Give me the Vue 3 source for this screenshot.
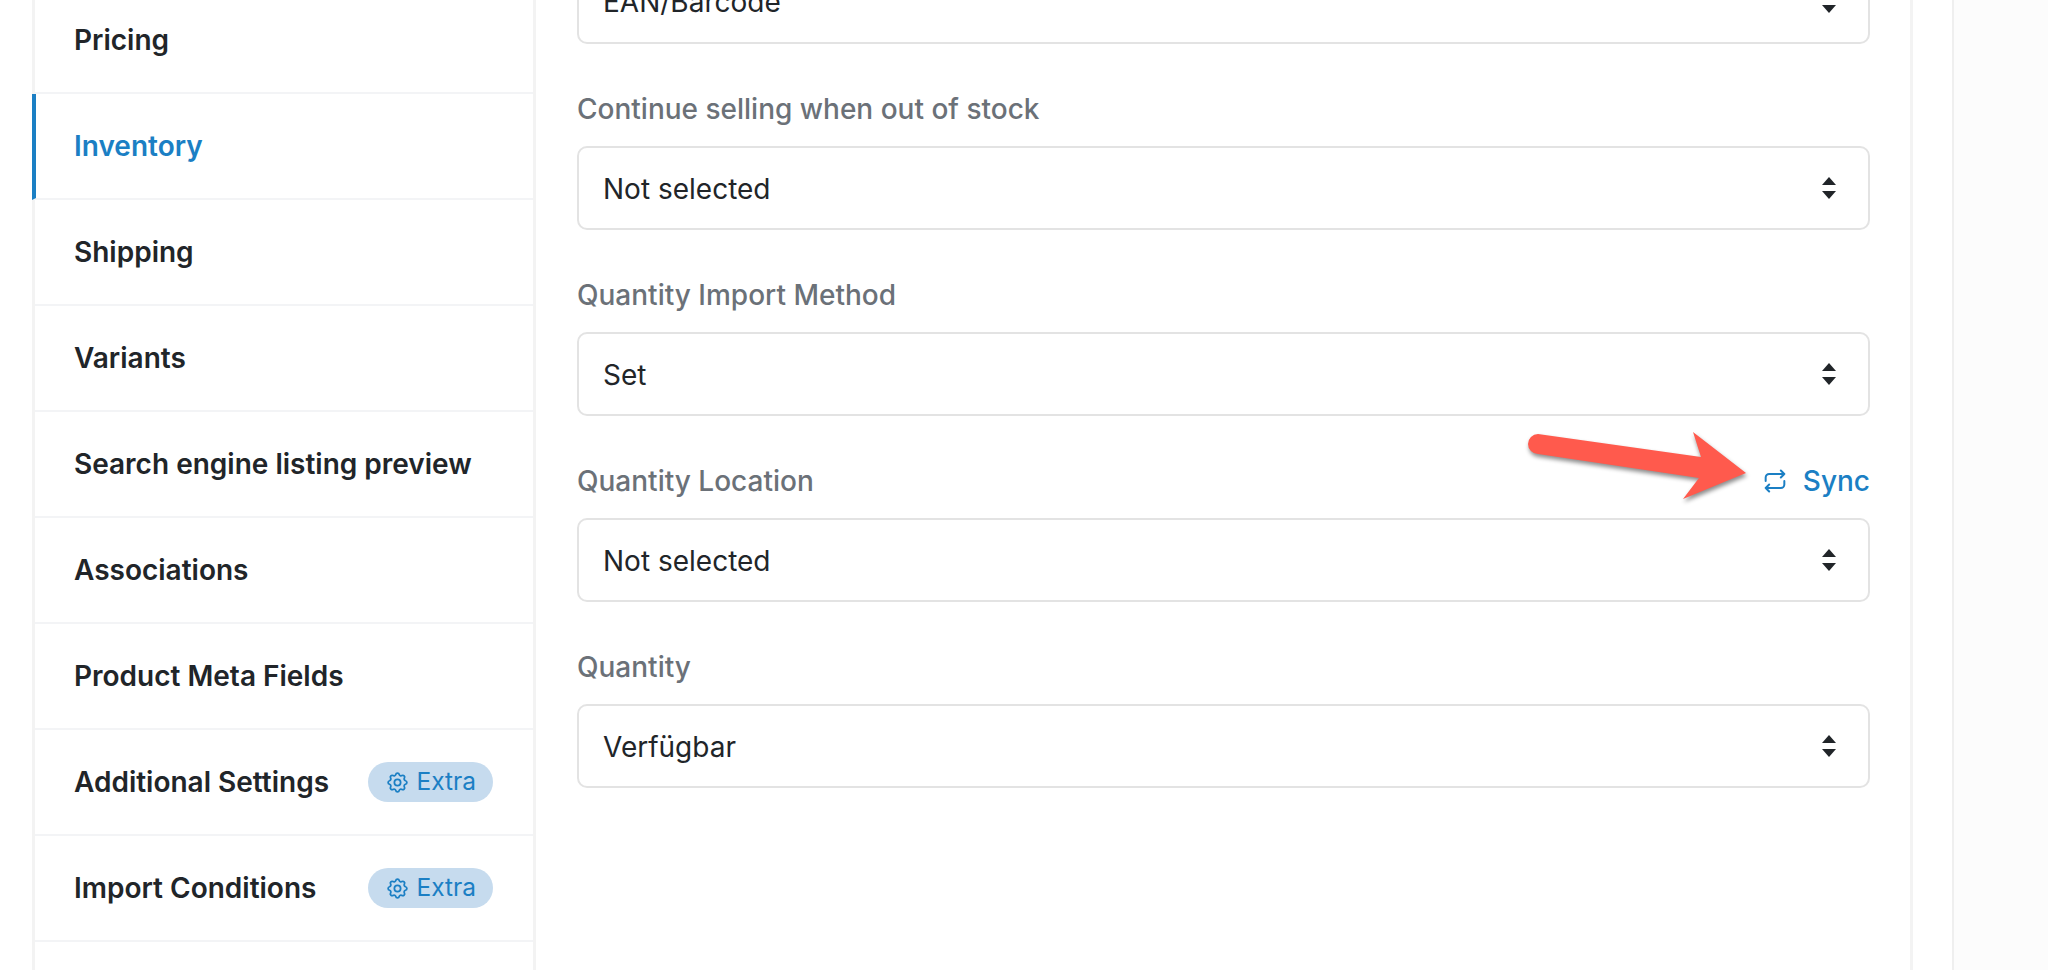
<script setup>
const navItems = [
  { name: 'Pricing' },
  { name: 'Inventory', active: true },
  { name: 'Shipping' },
  { name: 'Variants' },
  { name: 'Search engine listing preview' },
  { name: 'Associations' },
  { name: 'Product Meta Fields' },
  { name: 'Additional Settings', extra: true },
  { name: 'Import Conditions', extra: true },
  { name: '' }
]

const fields = [
  { label: 'Continue selling when out of stock', value: 'Not selected' },
  { label: 'Quantity Import Method', value: 'Set' },
  { label: 'Quantity Location', value: 'Not selected', sync: true },
  { label: 'Quantity', value: 'Verfügbar' }
]
</script>

<template>
  <div class="page">
    <div class="scroller">
      <aside class="sidebar">
        <div
          v-for="item in navItems"
          :key="item.name"
          class="nav-item"
          :class="{ active: item.active }"
        >
          <span>{{ item.name }}</span>
          <span v-if="item.extra" class="badge">
            <svg class="gear" viewBox="0 0 24 24" fill="none" stroke="currentColor" stroke-width="1.7" stroke-linecap="round" stroke-linejoin="round">
              <path d="M10.325 4.317c.426 -1.756 2.924 -1.756 3.35 0a1.724 1.724 0 0 0 2.573 1.066c1.543 -.94 3.31 .826 2.37 2.37a1.724 1.724 0 0 0 1.065 2.572c1.756 .426 1.756 2.924 0 3.35a1.724 1.724 0 0 0 -1.066 2.573c.94 1.543 -.826 3.31 -2.37 2.37a1.724 1.724 0 0 0 -2.572 1.065c-.426 1.756 -2.924 1.756 -3.35 0a1.724 1.724 0 0 0 -2.573 -1.066c-1.543 .94 -3.31 -.826 -2.37 -2.37a1.724 1.724 0 0 0 -1.065 -2.572c-1.756 -.426 -1.756 -2.924 0 -3.35a1.724 1.724 0 0 0 1.066 -2.573c-.94 -1.543 .826 -3.31 2.37 -2.37c1 .608 2.296 .07 2.572 -1.065z" />
              <circle cx="12" cy="12" r="3" />
            </svg>
            <span class="badge-text">Extra</span>
          </span>
        </div>
      </aside>

      <main class="form-panel">
        <div class="select first">
          <span>EAN/Barcode</span>
          <svg class="updown" viewBox="0 0 14 22"><path d="M7 0L0 8h14zM7 22L0 14h14z" /></svg>
        </div>

        <div v-for="field in fields" :key="field.label" class="field">
          <div class="label-row">
            <label>{{ field.label }}</label>
            <a v-if="field.sync" class="sync">
              <svg class="repeat" viewBox="0 0 24 24" fill="none" stroke="currentColor" stroke-width="1.7" stroke-linecap="round" stroke-linejoin="round">
                <path d="M4 12v-3a3 3 0 0 1 3 -3h13m-3 -3l3 3l-3 3" />
                <path d="M20 12v3a3 3 0 0 1 -3 3h-13m3 3l-3 -3l3 -3" />
              </svg>
              Sync
            </a>
            <!-- annotation drawn on top of the screenshot -->
            <svg v-if="field.sync" class="pointer" viewBox="0 0 240 90">
              <path d="M12 21L175 44L167 19L220 60L157 86L173 65L12 41A10 10 0 0 1 12 21z" />
            </svg>
          </div>
          <div class="select">
            <span class="select-value">{{ field.value }}</span>
            <svg class="updown" viewBox="0 0 14 22"><path d="M7 0L0 8h14zM7 22L0 14h14z" /></svg>
          </div>
        </div>
      </main>

      <div class="gutter"></div>
      <div class="rail"></div>
    </div>
  </div>
</template>

<style>
html, body {
  margin: 0;
  background: #fff;
}
</style>

<style scoped>
.page {
  height: 970px;
  overflow: hidden;
  font-family: Inter, "Noto Sans", sans-serif;
  color: #212529;
}
.scroller {
  display: flex;
  margin-top: -41px;
  min-height: 1100px;
  padding-left: 32px;
}
.sidebar {
  width: 501px;
  flex: none;
  box-sizing: border-box;
  margin-top: 29px;
  border-left: 3px solid #f3f3f3;
}
.nav-item {
  height: 106px;
  box-sizing: border-box;
  border-bottom: 2px solid #f3f4f6;
  padding: 0 40px 0 39px;
  display: flex;
  align-items: center;
  justify-content: space-between;
  font-size: 28px;
  font-weight: 600;
}
.nav-item.active {
  color: #1b7fc4;
  margin-left: -3px;
  padding-left: 38px;
  border-left: 4px solid #1b7fc4;
}
.badge {
  display: flex;
  align-items: center;
  gap: 6px;
  height: 40px;
  box-sizing: border-box;
  padding: 0 17px 0 17px;
  border-radius: 20px;
  background: #c6dbee;
  color: #1b7fc4;
  font-size: 24.5px;
  font-weight: 400;
}
.badge-text {
  margin-top: -2px;
}
.gear {
  width: 25px;
  height: 25px;
}
.form-panel {
  flex: none;
  width: 1380px;
  box-sizing: border-box;
  border-left: 3px solid #f3f3f3;
  border-right: 3px solid #f3f3f3;
  padding: 0 40px 0 41px;
}
.field {
  margin-top: 46px;
}
.label-row {
  position: relative;
  height: 38px;
  margin-bottom: 18px;
  display: flex;
  align-items: center;
  justify-content: space-between;
  font-size: 28px;
  font-weight: 500;
  color: #6b7178;
}
.sync {
  display: flex;
  align-items: center;
  gap: 14px;
  color: #1b7fc4;
}
.repeat {
  width: 28px;
  height: 28px;
}
.pointer {
  position: absolute;
  left: 949px;
  top: -49px;
  width: 240px;
  height: 90px;
  overflow: visible;
  fill: #ff5a4d;
  filter: drop-shadow(1px 3px 2px rgba(0, 0, 0, 0.45));
}
.select {
  height: 84px;
  box-sizing: border-box;
  border: 2px solid #e3e3e3;
  border-radius: 10px;
  padding: 0 32px 0 24px;
  display: flex;
  align-items: center;
  justify-content: space-between;
  font-size: 28px;
  color: #212529;
}
.select.first {
  height: 85px;
}
.select-value {
  margin-top: 1px;
}
.updown {
  width: 14px;
  height: 22px;
  fill: #212529;
}
.gutter {
  width: 39px;
  flex: none;
}
.rail {
  flex: 1;
  background: #fcfcfc;
  border-left: 2px solid #efefef;
}
</style>
